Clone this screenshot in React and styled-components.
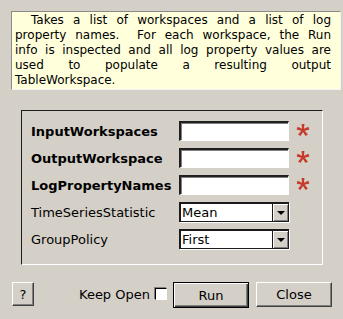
import styled, { createGlobalStyle } from "styled-components"

const GlobalStyle = createGlobalStyle`
    html, body {
        margin: 0;
        padding: 0;
        background: #d4d0c8;
    }
    body {
        font-family: "DejaVu Sans", "Liberation Sans", sans-serif;
        font-size: 13px;
        color: #000;
    }
`

// the help text wraps like the original label does
const helpLines = [
    "Takes a list of workspaces and a list of log",
    "property names.\u00a0 For each workspace, the Run",
    "info is inspected and all log property values are",
    "used to populate a resulting output",
    "TableWorkspace.",
]

const fields = [
    { name: "InputWorkspaces", bold: true, kind: "text" },
    { name: "OutputWorkspace", bold: true, kind: "text" },
    { name: "LogPropertyNames", bold: true, kind: "text" },
    { name: "TimeSeriesStatistic", kind: "select", value: "Mean" },
    { name: "GroupPolicy", kind: "select", value: "First" },
]

function Star () {
    return (
        <svg width="16" height="16" viewBox="0 0 16 16">
            <path
                d="M6.6 1 h2.8 l-0.4 4.8 4.4 -2 1 2.7 -4.7 1.2 3.2 3.7 -2.3 1.7 -2.6 -4.1 -2.6 4.1 -2.3 -1.7 3.2 -3.7 -4.7 -1.2 1 -2.7 4.4 2 z"
                fill="#c53a2a"
            />
        </svg>
    )
}

export default function App () {
    return (
        <Page>
            <GlobalStyle />
            <Description>
                {helpLines.map((line, i) => (
                    <HelpLine key={i} $first={i === 0} $last={i === helpLines.length - 1}>
                        {line}
                    </HelpLine>
                ))}
            </Description>

            <Group>
                {fields.map(f => (
                    <Row key={f.name}>
                        <Label $bold={f.bold}>{f.name}</Label>
                        {f.kind === "text" ? (
                            <TextInput />
                        ) : (
                            <Combo>
                                <ComboText>{f.value}</ComboText>
                                <ComboButton>
                                    <Arrow />
                                </ComboButton>
                            </Combo>
                        )}
                        <Mark>{f.kind === "text" && <Star />}</Mark>
                    </Row>
                ))}
            </Group>

            <Footer>
                <Button $w={22} $h={24}>?</Button>
                <KeepOpen>
                    Keep Open <Check />
                </KeepOpen>
                <Button $w={76} $h={26} $default>Run</Button>
                <Button $w={76} $h={25}>Close</Button>
            </Footer>
        </Page>
    )
}

const Page = styled.div`
    width: 343px;
    height: 319px;
    box-sizing: border-box;
    padding-top: 11px;
    display: flex;
    flex-direction: column;
`

const Description = styled.div`
    margin-left: 11px;
    width: 330px;
    height: 79px;
    box-sizing: border-box;
    background: #ffffdc;
    border: 1px solid;
    border-color: #8a8a8a #f4f4f4 #f4f4f4 #8a8a8a;
    padding: 1px 9px 0 3px;
    font-size: 12px;
    line-height: 15px;
`

const HelpLine = styled.div`
    white-space: nowrap;
    text-align: justify;
    text-align-last: ${p => (p.$last ? "left" : "justify")};
    text-indent: ${p => (p.$first ? "16px" : "0")};
`

const Group = styled.div`
    margin: 20px 0 0 21px;
    width: 302px;
    height: 155px;
    box-sizing: border-box;
    border: 1px solid;
    border-color: #1c1c1c #ffffff #ffffff #1c1c1c;
    padding: 10px 0 0 9px;
    display: flex;
    flex-direction: column;
    gap: 7px;
`

const Row = styled.div`
    display: grid;
    grid-template-columns: 148px 110px auto;
    align-items: center;
    height: 20px;
`

const Label = styled.span`
    font-weight: ${p => (p.$bold ? "bold" : "normal")};
    white-space: nowrap;
`

const TextInput = styled.div`
    height: 20px;
    box-sizing: border-box;
    background: #fff;
    border-top: 2px solid #202020;
    border-left: 2px solid #202020;
    border-right: 1px solid #fff;
    border-bottom: 1px solid #fff;
    box-shadow: inset 1px 1px 0 #808080;
`

const Combo = styled.div`
    height: 20px;
    box-sizing: border-box;
    display: flex;
    background: #fff;
    border: 2px solid #1a1a1a;
    border-right-width: 1px;
    border-bottom-width: 1px;
    box-shadow: 1px 1px 0 #fff;
`

const ComboText = styled.span`
    flex: 1;
    padding-left: 1px;
    line-height: 17px;
`

const ComboButton = styled.div`
    width: 15px;
    background: #d4d0c8;
    border-left: 1px solid #1a1a1a;
    box-shadow: inset 1px 1px 0 #fff, inset -1px -1px 0 #808080;
    display: flex;
    align-items: center;
    justify-content: center;
`

const Arrow = styled.div`
    width: 0;
    height: 0;
    border-left: 4px solid transparent;
    border-right: 4px solid transparent;
    border-top: 4px solid #000;
`

const Mark = styled.div`
    display: flex;
    align-items: center;
    padding-left: 6px;
`

const Footer = styled.div`
    margin: 17px 0 0 12px;
    display: flex;
    align-items: flex-start;
`

const Button = styled.div`
    width: ${p => p.$w}px;
    height: ${p => p.$h}px;
    box-sizing: border-box;
    display: flex;
    align-items: center;
    justify-content: center;
    background: #d4d0c8;
    border: 1px solid;
    border-color: ${p => (p.$default ? "#000" : "#fff #404040 #404040 #fff")};
    box-shadow: ${p =>
        p.$default
            ? "inset 1px 1px 0 #fff, inset -1px -1px 0 #404040, inset -2px -2px 0 #808080"
            : "inset -1px -1px 0 #808080"};
    margin-right: 7px;
`

const KeepOpen = styled.label`
    margin: 0 6px 0 38px;
    height: 24px;
    display: flex;
    align-items: center;
    gap: 5px;
`

const Check = styled.span`
    width: 12px;
    height: 12px;
    box-sizing: border-box;
    background: #fff;
    border: 1px solid;
    border-color: #000 #fff #fff #000;
    box-shadow: -1px -1px 0 #808080;
`
